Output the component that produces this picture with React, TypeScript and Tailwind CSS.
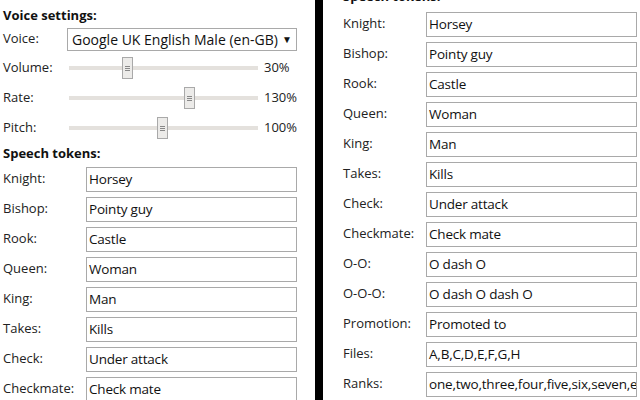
const tokens1 = [
  ["Knight:", "Horsey"],
  ["Bishop:", "Pointy guy"],
  ["Rook:", "Castle"],
  ["Queen:", "Woman"],
  ["King:", "Man"],
  ["Takes:", "Kills"],
  ["Check:", "Under attack"],
  ["Checkmate:", "Check mate"],
];
const tokens2 = [
  ...tokens1,
  ["O-O:", "O dash O"],
  ["O-O-O:", "O dash O dash O"],
  ["Promotion:", "Promoted to"],
  ["Files:", "A,B,C,D,E,F,G,H"],
  ["Ranks:", "one,two,three,four,five,six,seven,eight"],
];

function Slider({ label, pos, value }: { label: string; pos: number; value: string }) {
  return (
    <div className="flex items-center h-[30px]">
      <div className="w-[66px]">{label}</div>
      <div className="relative w-[189px] h-[22px] flex items-center">
        <div className="w-full h-[4px] bg-[#e4e1dd]" />
        <div
          className="absolute top-0 w-[11px] h-[22px] bg-[#ecebe9] border border-[#a9a9a9] flex flex-col items-center justify-center gap-[1px]"
          style={{ left: pos }}
        >
          <div className="w-[5px] h-px bg-[#888]" />
          <div className="w-[5px] h-px bg-[#888]" />
          <div className="w-[5px] h-px bg-[#888]" />
        </div>
      </div>
      <div className="ml-[6px]">{value}</div>
    </div>
  );
}

function Row({ label, value, lw }: { label: string; value: string; lw: string }) {
  return (
    <div className="flex items-center h-[30px]">
      <div className={lw}>{label}</div>
      <div className="w-[211px] h-[25px] border border-[#a9a9a9] px-[2px] flex items-center whitespace-nowrap overflow-hidden text-[13.5px] tracking-[-0.2px] text-[#111]">
        {value}
      </div>
    </div>
  );
}

export default function App() {
  return (
    <div
      className="w-[640px] h-[400px] overflow-hidden bg-white flex text-[13px] text-[#222]"
      style={{ fontFamily: "'Open Sans', 'Noto Sans', sans-serif" }}
    >
      <div className="w-[315px] shrink-0 pl-[3px]">
        <div className="font-bold text-[#111] mt-[5px] h-[20px] leading-[20px]">Voice settings:</div>
        <div className="flex items-center h-[28px]">
          <div className="w-[64px]">Voice:</div>
          <div className="w-[230px] h-[23px] border border-[#a9a9a9] flex items-center justify-between px-[4px] text-[14px] text-[#111]">
            <span>Google UK English Male (en-GB)</span>
            <span className="text-[10px]">▼</span>
          </div>
        </div>
        <Slider label="Volume:" pos={53} value="30%" />
        <Slider label="Rate:" pos={115} value="130%" />
        <Slider label="Pitch:" pos={88} value="100%" />
        <div className="font-bold text-[#111] h-[21px] leading-[21px]">Speech tokens:</div>
        {tokens1.map(([l, v]) => (
          <Row key={l} label={l} value={v} lw="w-[83px]" />
        ))}
      </div>
      <div className="w-[8px] shrink-0 bg-black" />
      <div className="flex-1 pl-[20px] -mt-[16px]">
        <div className="font-bold text-[#111] h-[25px] leading-[25px]">Speech tokens:</div>
        {tokens2.map(([l, v]) => (
          <Row key={l} label={l} value={v} lw="w-[83px]" />
        ))}
      </div>
    </div>
  );
}
